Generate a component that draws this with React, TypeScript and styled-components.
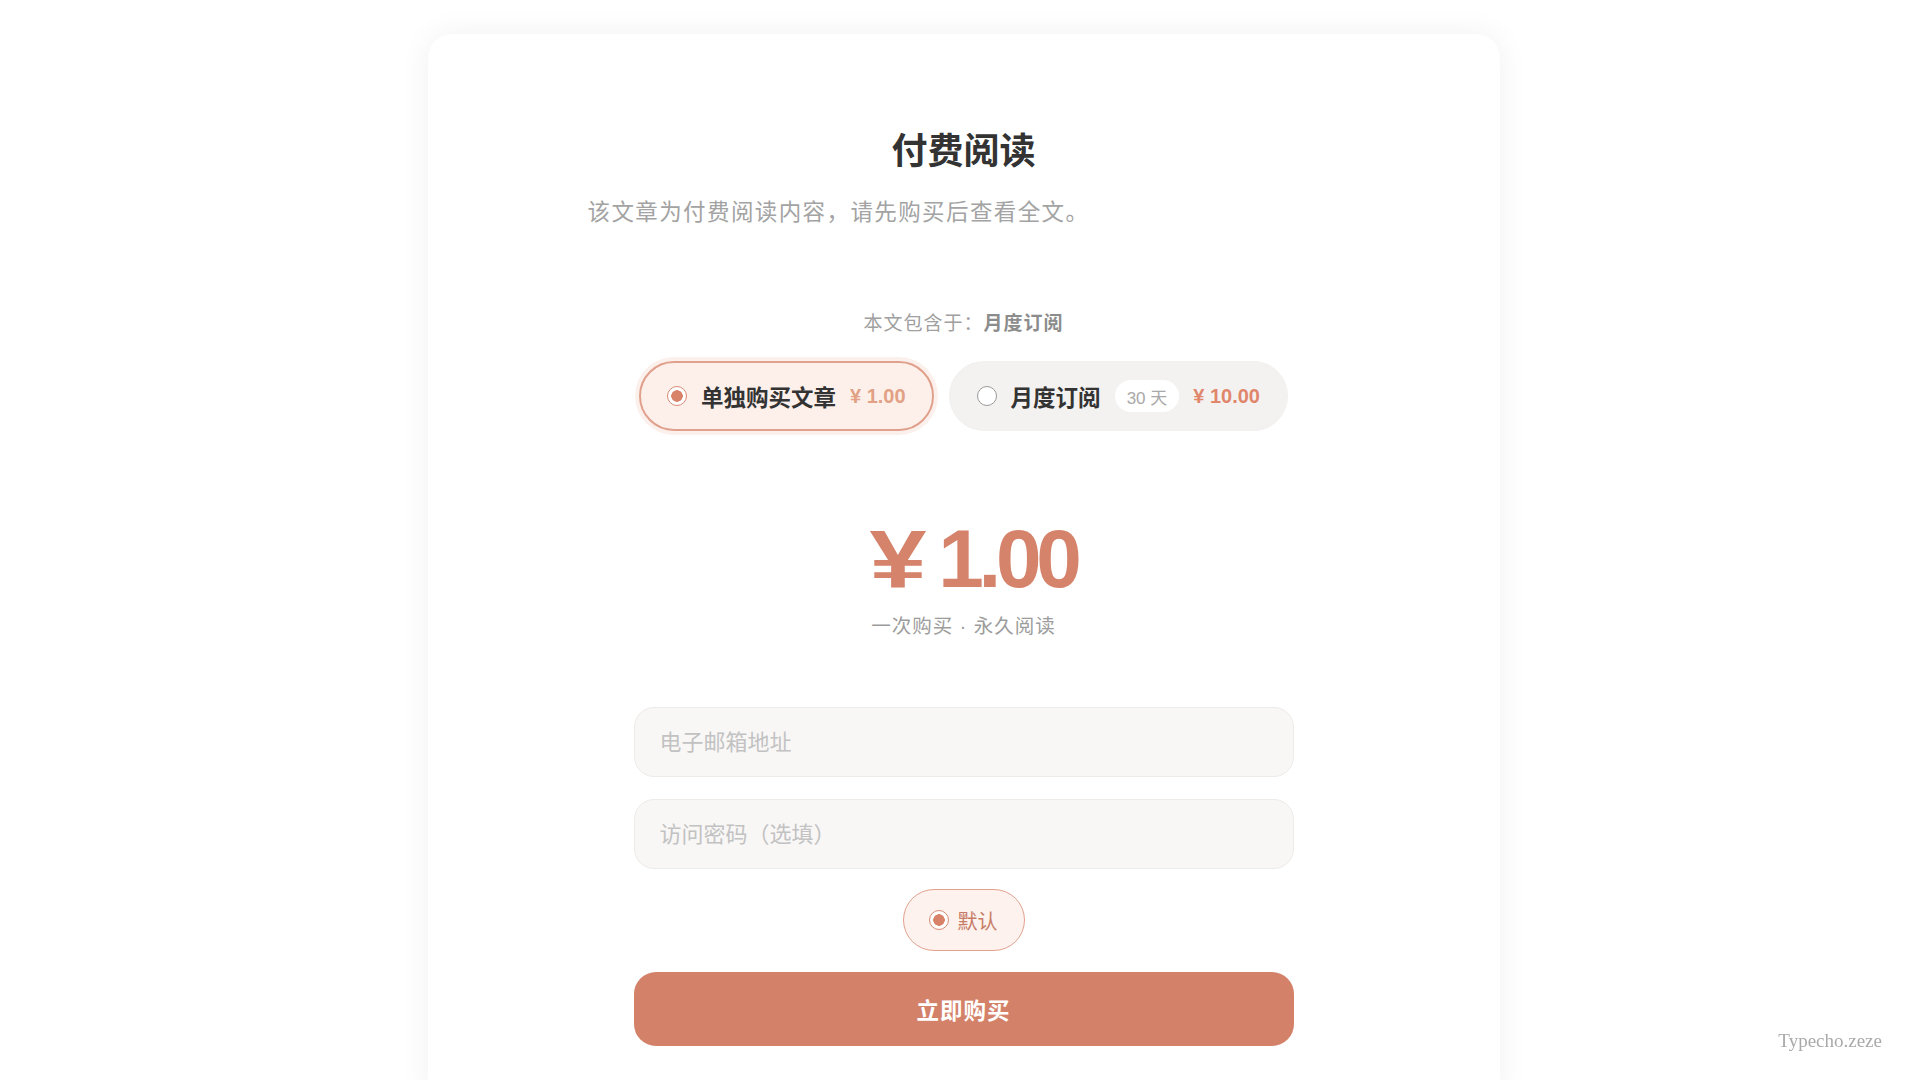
import styled, { createGlobalStyle } from 'styled-components';

const GlobalStyle = createGlobalStyle`
  body {
    margin: 0;
    background: #ffffff;
    font-family: "Liberation Sans", "Noto Sans CJK SC", sans-serif;
    color: #333;
  }
`;

const OPTIONS = [
  { id: 'single', title: '单独购买文章', price: '¥ 1.00', active: true },
  { id: 'month', title: '月度订阅', badge: '30 天', price: '¥ 10.00', active: false },
];

export default function App() {
  return (
    <>
      <GlobalStyle />
      <Page>
        <Card>
          <Title>付费阅读</Title>
          <Intro>该文章为付费阅读内容，请先购买后查看全文。</Intro>

          <Included>
            本文包含于：<b>月度订阅</b>
          </Included>

          <OptionRow>
            {OPTIONS.map((item) => (
              <Option key={item.id} $active={item.active}>
                <Radio $checked={item.active} />
                <OptionTitle>{item.title}</OptionTitle>
                {item.badge && <Badge>{item.badge}</Badge>}
                <OptionPrice $active={item.active}>{item.price}</OptionPrice>
              </Option>
            ))}
          </OptionRow>

          <Price>
            <Currency>¥</Currency>1.00
          </Price>
          <PriceNote>一次购买 · 永久阅读</PriceNote>

          <Form>
            <Field type="email" placeholder="电子邮箱地址" />
            <Field type="password" placeholder="访问密码（选填）" />
            <MethodPill>
              <Radio $checked />
              <span>默认</span>
            </MethodPill>
            <BuyButton>立即购买</BuyButton>
          </Form>
        </Card>
      </Page>
      <Footer>Typecho.zeze</Footer>
    </>
  );
}

const Page = styled.div`
  display: flex;
  justify-content: center;
  padding: 34px 0 0 8px;
`;

const Card = styled.section`
  width: 1072px;
  box-sizing: border-box;
  padding: 96px 160px 60px;
  background: #fff;
  border-radius: 24px;
  box-shadow: 0 0 32px rgba(0, 0, 0, 0.06);
  display: flex;
  flex-direction: column;
`;

const Title = styled.h1`
  margin: 0;
  font-size: 36px;
  line-height: 44px;
  font-weight: 700;
  text-align: center;
  color: #333;
`;

const Intro = styled.p`
  margin: 23px 0 0;
  font-size: 22.5px;
  line-height: 32px;
  letter-spacing: 1.4px;
  color: #a3a3a3;
`;

const Included = styled.div`
  margin-top: 81px;
  font-size: 19px;
  line-height: 28px;
  letter-spacing: 1px;
  text-align: center;
  color: #a0a0a0;

  b {
    color: #8c8c8c;
    font-weight: 700;
  }
`;

const OptionRow = styled.div`
  margin-top: 23px;
  display: flex;
  justify-content: center;
  gap: 15px;
`;

const Option = styled.div<{ $active: boolean }>`
  height: 70px;
  box-sizing: border-box;
  display: flex;
  align-items: center;
  gap: 14px;
  padding: 0 26px;
  border-radius: 35px;
  border: 2px solid ${(p) => (p.$active ? '#e0a08c' : '#f3f1f0')};
  background: ${(p) => (p.$active ? '#fdf0eb' : '#f4f2f1')};
  box-shadow: ${(p) => (p.$active ? '0 0 0 4px rgba(232, 160, 138, 0.16)' : 'none')};
`;

const Radio = styled.span<{ $checked?: boolean }>`
  width: 20px;
  height: 20px;
  box-sizing: border-box;
  border-radius: 50%;
  flex-shrink: 0;
  border: 1.5px solid ${(p) => (p.$checked ? '#d98a74' : '#9a9a9a')};
  background: ${(p) =>
    p.$checked
      ? 'radial-gradient(circle, #d9826a 0 5.5px, #fff 6px)'
      : '#fff'};
`;

const OptionTitle = styled.span`
  font-size: 22.5px;
  font-weight: 700;
  color: #333;
  white-space: nowrap;
`;

const Badge = styled.span`
  height: 32px;
  padding: 0 12px;
  border-radius: 16px;
  background: #fff;
  display: flex;
  align-items: center;
  font-size: 17px;
  color: #a8a8a8;
`;

const OptionPrice = styled.span<{ $active: boolean }>`
  font-size: 20px;
  font-weight: 700;
  color: ${(p) => (p.$active ? '#e2a184' : '#e0866c')};
  white-space: nowrap;
`;

const Price = styled.div`
  margin-top: 87px;
  padding-left: 30px;
  font-size: 82px;
  line-height: 82px;
  font-weight: 700;
  letter-spacing: -0.065em;
  text-align: center;
  color: #d5836b;
`;

const Currency = styled.span`
  display: inline-block;
  letter-spacing: 0;
  margin-right: 12px;
  transform: scaleX(1.25);
  transform-origin: right center;
`;

const PriceNote = styled.div`
  margin-top: 12px;
  font-size: 19.5px;
  line-height: 28px;
  letter-spacing: 1px;
  text-align: center;
  color: #9c9c9c;
`;

const Form = styled.div`
  width: 660px;
  margin: 67px auto 0;
  display: flex;
  flex-direction: column;
  align-items: center;
`;

const Field = styled.input`
  width: 100%;
  height: 70px;
  box-sizing: border-box;
  padding: 2px 25px 0;
  border-radius: 20px;
  border: 1.5px solid #eeebe9;
  background: #f8f7f6;
  font-family: "Liberation Sans", "Noto Sans CJK SC", sans-serif;
  font-size: 22px;
  color: #333;
  outline: none;

  & + & {
    margin-top: 22px;
  }

  &::placeholder {
    color: #c2c2c2;
  }
`;

const MethodPill = styled.div`
  margin-top: 20px;
  height: 62px;
  box-sizing: border-box;
  padding: 0 26px 0 25px;
  display: flex;
  align-items: center;
  gap: 9px;
  border-radius: 31px;
  border: 1.5px solid #e2a18e;
  background: #fdf2ee;
  font-size: 20px;
  color: #c77c66;
`;

const BuyButton = styled.button`
  margin-top: 21px;
  width: 100%;
  height: 74px;
  border: none;
  border-radius: 22px;
  background: #d4816a;
  color: #fff;
  font-family: "Liberation Sans", "Noto Sans CJK SC", sans-serif;
  font-size: 22.5px;
  font-weight: 700;
  letter-spacing: 1px;
  cursor: pointer;
`;

const Footer = styled.div`
  position: fixed;
  right: 37px;
  bottom: 27px;
  font-family: "Liberation Serif", serif;
  font-size: 19px;
  line-height: 24px;
  color: #aaa;
`;
